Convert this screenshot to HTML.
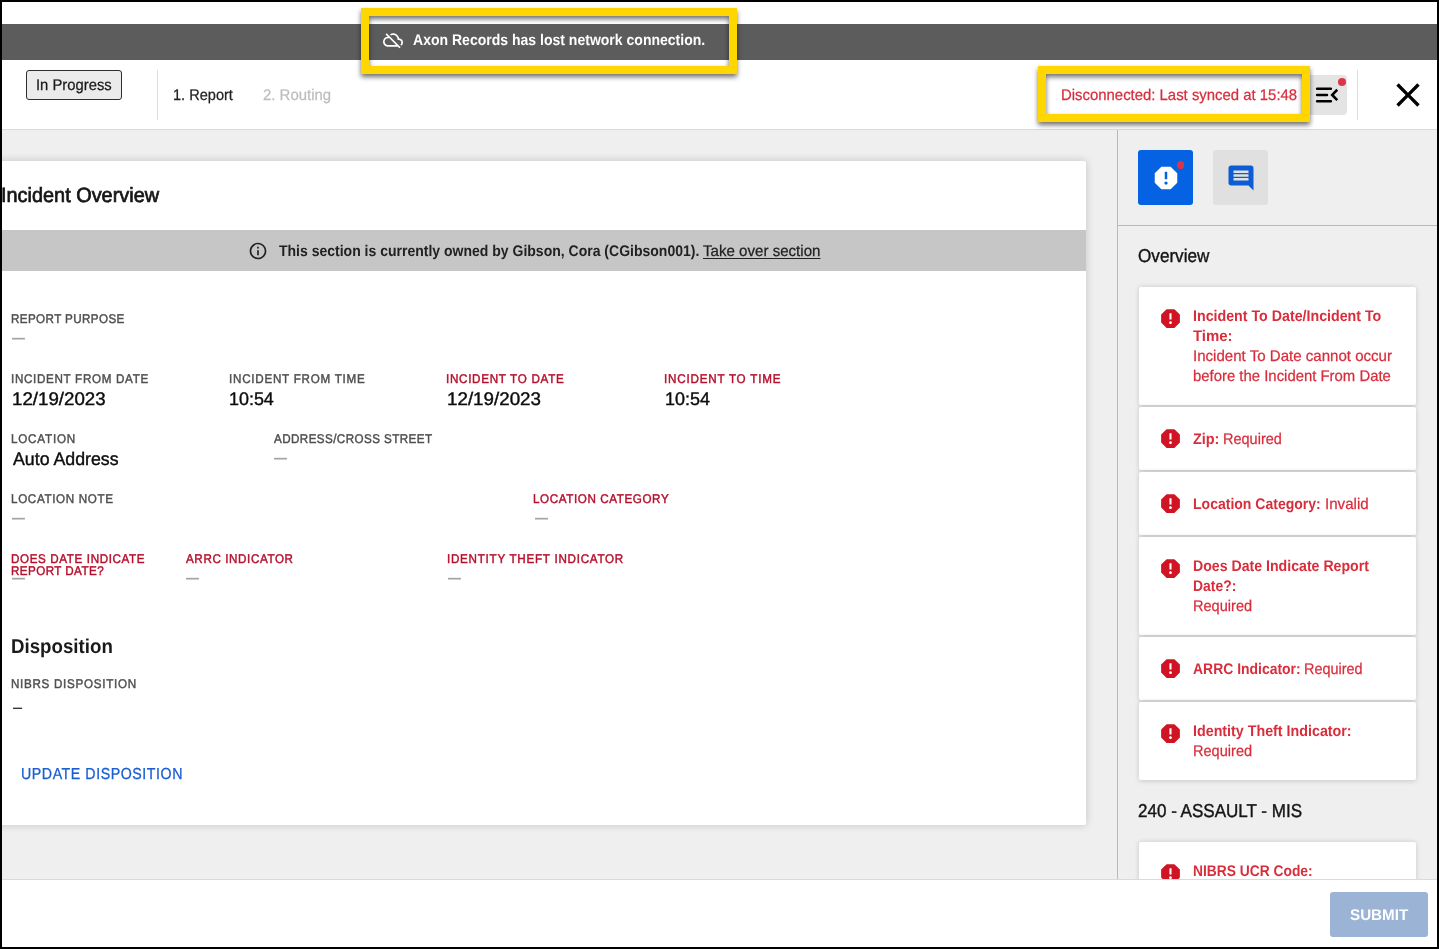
<!DOCTYPE html>
<html lang="en">
<head>
<meta charset="utf-8">
<title>Axon Records - Incident Report</title>
<style>
  html, body { margin: 0; padding: 0; }
  body { width: 1439px; height: 949px; position: relative; overflow: hidden; background: #fff;
         font-family: "Liberation Sans", sans-serif; text-rendering: geometricPrecision; }
  .abs, .t, svg.i { position: absolute; }
  .t { white-space: nowrap; display: block; transform-origin: 0 0; }
  #frame { left: 0; top: 0; width: 1439px; height: 949px; box-sizing: border-box; border: 2px solid #000; z-index: 50; pointer-events: none; }
  #banner { left: 2px; top: 24px; width: 1435px; height: 36px; background: #5c5c5c; }
  #header { left: 2px; top: 60px; width: 1435px; height: 69px; background: #fff; border-bottom: 1px solid #dadada; }
  #main { left: 2px; top: 130px; width: 1435px; height: 749px; background: #efefef; }
  #card { left: -16px; top: 161px; width: 1102px; height: 664px; background: #fff; border-radius: 2px;
          box-shadow: 0 0 8px rgba(0,0,0,.19); }
  #owned { left: 2px; top: 230px; width: 1084px; height: 41px; background: #c6c6c6; }
  #side-l { left: 1117px; top: 130px; width: 1px; height: 749px; background: #b9b9b9; }
  #side-h { left: 1118px; top: 225px; width: 1319px; height: 1px; background: #b9b9b9; }
  #tab1 { left: 1138px; top: 150px; width: 55px; height: 55px; border-radius: 3px; background: #0562e3; }
  #tab2 { left: 1213px; top: 150px; width: 55px; height: 55px; border-radius: 3px; background: #e0e0e0; }
  .dot { width: 8px; height: 8px; border-radius: 50%; background: #dc3545; }
  .ec { left: 1139px; width: 277px; background: #fff; border-radius: 2px;
        box-shadow: 0 0.5px 5px rgba(0,0,0,.17); }
  #footer { z-index: 30; left: 2px; top: 879px; width: 1435px; height: 68px; background: #fff; border-top: 1px solid #dadada; box-sizing: border-box; }
  #submit { z-index: 31; left: 1330px; top: 892px; width: 98px; height: 45px; border-radius: 3px; background: #9bb3d4; }
  #badge { left: 26px; top: 70px; width: 96px; height: 30px; box-sizing: border-box; border: 1px solid #2e2e2e; border-radius: 3px; background: #ebebeb; }
  .vdiv { top: 70px; width: 1px; height: 50px; background: #dddddd; }
  #menu { left: 1307px; top: 75px; width: 40px; height: 40px; border-radius: 4px; background: #e4e4e4; }
  .hl { box-sizing: border-box; border: 8px solid #ffd600; filter: drop-shadow(0.7px 3.7px 2.8px rgba(0,0,0,.56)); z-index: 20; }
  #hl1 { left: 361px; top: 8px; width: 376px; height: 66px; }
  #hl2 { left: 1038px; top: 66px; width: 272px; height: 56px; }
</style>
</head>
<body>
<div class="abs" id="banner"></div>
<div class="abs" id="header"></div>
<div class="abs" id="main"></div>
<div class="abs" id="card"></div>
<div class="abs" id="owned"></div>
<div class="abs" id="side-l"></div>
<div class="abs" id="side-h"></div>
<div class="abs" id="tab1"></div>
<div class="abs" id="tab2"></div>
<div class="abs ec" style="top:287px;height:118px"></div>
<div class="abs ec" style="top:407px;height:63px"></div>
<div class="abs ec" style="top:472px;height:63px"></div>
<div class="abs ec" style="top:537px;height:98px"></div>
<div class="abs ec" style="top:637px;height:63px"></div>
<div class="abs ec" style="top:702px;height:78px"></div>
<div class="abs ec" style="top:842px;height:63px"></div>
<div class="abs" id="footer"></div>
<div class="abs" id="submit"></div>
<div class="abs" id="badge"></div>
<div class="abs vdiv" style="left:157px"></div>
<div class="abs vdiv" style="left:1357px"></div>
<div class="abs" id="menu"></div>

<svg class="i" style="left:382.8px;top:29.8px" width="20" height="20" viewBox="0 0 24 24"><path fill="#fff" d="M24 15c0-2.64-2.05-4.78-4.65-4.96C18.67 6.59 15.64 4 12 4c-1.33 0-2.57.36-3.65.97l1.49 1.49C10.51 6.17 11.23 6 12 6c3.04 0 5.5 2.46 5.5 5.5v.5H19c1.66 0 3 1.34 3 3 0 .99-.48 1.85-1.21 2.4l1.41 1.41c1.09-.92 1.8-2.27 1.8-3.81zM4.41 3.86L3 5.27l2.77 2.77h-.42C2.34 8.36 0 10.91 0 14c0 3.31 2.69 6 6 6h11.73l2 2 1.41-1.41L4.41 3.86zM6 18c-2.21 0-4-1.79-4-4s1.79-4 4-4h1.73l8 8H6z"/></svg>
<svg class="i" style="left:248px;top:241px" width="20" height="20" viewBox="0 0 24 24"><path fill="#212121" d="M11 7h2v2h-2zm0 4h2v6h-2zm1-9C6.48 2 2 6.48 2 12s4.48 10 10 10 10-4.48 10-10S17.52 2 12 2zm0 18c-4.41 0-8-3.59-8-8s3.59-8 8-8 8 3.59 8 8-3.59 8-8 8z"/></svg>
<svg class="i" style="left:1307px;top:75px" width="40" height="40" viewBox="1307 75 40 40"><g fill="none" stroke="#000" stroke-width="2.5"><path stroke-linecap="round" d="M1317.1 88.7H1330.9M1317.1 94.9H1327M1317.1 101.3H1330.9"/><path stroke-width="2.6" d="M1337.25 89.75L1332.2 94.95L1337.25 100.15"/></g></svg>
<div class="abs dot" style="left:1338px;top:78px"></div>
<svg class="i" style="left:1388px;top:75px" width="40" height="40" viewBox="0 0 24 24"><path fill="#000" d="M19 6.41L17.59 5 12 10.59 6.41 5 5 6.41 10.59 12 5 17.59 6.41 19 12 13.41 17.59 19 19 17.59 13.41 12z"/></svg>
<svg class="i" style="left:1151px;top:163px" width="30" height="30" viewBox="0 0 24 24"><path fill="#fff" d="M15.73 3H8.27L3 8.27v7.46L8.27 21h7.46L21 15.73V8.27L15.73 3zM12 17.3c-.72 0-1.3-.58-1.3-1.3 0-.72.58-1.3 1.3-1.3.72 0 1.3.58 1.3 1.3 0 .72-.58 1.3-1.3 1.3zm1-4.3h-2V7h2v6z"/></svg>
<div class="abs dot" style="left:1176.8px;top:161.3px;width:7.4px;height:7.4px"></div>
<svg class="i" style="left:1225.7px;top:162.8px" width="30" height="30" viewBox="0 0 24 24"><path fill="#0b5cd5" d="M21.99 4c0-1.1-.89-2-1.99-2H4c-1.1 0-2 .9-2 2v12c0 1.1.9 2 2 2h14l4 4-.01-18zM18 14H6v-2h12v2zm0-3H6V9h12v2zm0-3H6V6h12v2z"/></svg>
<svg class="i" style="left:1158.1px;top:306.05px" width="25" height="25" viewBox="0 0 24 24"><path fill="#d01423" d="M15.73 3H8.27L3 8.27v7.46L8.27 21h7.46L21 15.73V8.27L15.73 3zM12 17.3c-.72 0-1.3-.58-1.3-1.3 0-.72.58-1.3 1.3-1.3.72 0 1.3.58 1.3 1.3 0 .72-.58 1.3-1.3 1.3zm1-4.3h-2V7h2v6z"/></svg>
<svg class="i" style="left:1158.1px;top:426.05px" width="25" height="25" viewBox="0 0 24 24"><path fill="#d01423" d="M15.73 3H8.27L3 8.27v7.46L8.27 21h7.46L21 15.73V8.27L15.73 3zM12 17.3c-.72 0-1.3-.58-1.3-1.3 0-.72.58-1.3 1.3-1.3.72 0 1.3.58 1.3 1.3 0 .72-.58 1.3-1.3 1.3zm1-4.3h-2V7h2v6z"/></svg>
<svg class="i" style="left:1158.1px;top:491.05px" width="25" height="25" viewBox="0 0 24 24"><path fill="#d01423" d="M15.73 3H8.27L3 8.27v7.46L8.27 21h7.46L21 15.73V8.27L15.73 3zM12 17.3c-.72 0-1.3-.58-1.3-1.3 0-.72.58-1.3 1.3-1.3.72 0 1.3.58 1.3 1.3 0 .72-.58 1.3-1.3 1.3zm1-4.3h-2V7h2v6z"/></svg>
<svg class="i" style="left:1158.1px;top:556.05px" width="25" height="25" viewBox="0 0 24 24"><path fill="#d01423" d="M15.73 3H8.27L3 8.27v7.46L8.27 21h7.46L21 15.73V8.27L15.73 3zM12 17.3c-.72 0-1.3-.58-1.3-1.3 0-.72.58-1.3 1.3-1.3.72 0 1.3.58 1.3 1.3 0 .72-.58 1.3-1.3 1.3zm1-4.3h-2V7h2v6z"/></svg>
<svg class="i" style="left:1158.1px;top:656.05px" width="25" height="25" viewBox="0 0 24 24"><path fill="#d01423" d="M15.73 3H8.27L3 8.27v7.46L8.27 21h7.46L21 15.73V8.27L15.73 3zM12 17.3c-.72 0-1.3-.58-1.3-1.3 0-.72.58-1.3 1.3-1.3.72 0 1.3.58 1.3 1.3 0 .72-.58 1.3-1.3 1.3zm1-4.3h-2V7h2v6z"/></svg>
<svg class="i" style="left:1158.1px;top:721.05px" width="25" height="25" viewBox="0 0 24 24"><path fill="#d01423" d="M15.73 3H8.27L3 8.27v7.46L8.27 21h7.46L21 15.73V8.27L15.73 3zM12 17.3c-.72 0-1.3-.58-1.3-1.3 0-.72.58-1.3 1.3-1.3.72 0 1.3.58 1.3 1.3 0 .72-.58 1.3-1.3 1.3zm1-4.3h-2V7h2v6z"/></svg>
<svg class="i" style="left:1158.1px;top:861.05px" width="25" height="25" viewBox="0 0 24 24"><path fill="#d01423" d="M15.73 3H8.27L3 8.27v7.46L8.27 21h7.46L21 15.73V8.27L15.73 3zM12 17.3c-.72 0-1.3-.58-1.3-1.3 0-.72.58-1.3 1.3-1.3.72 0 1.3.58 1.3 1.3 0 .72-.58 1.3-1.3 1.3zm1-4.3h-2V7h2v6z"/></svg>

<span class="t" style="left:413.05px;top:33.00px;font-size:15.45px;line-height:15.45px;transform:scaleX(0.9084);color:#ffffff;font-weight:700;">Axon Records has lost network connection.</span>
<span class="t" style="left:35.96px;top:78.00px;font-size:15.45px;line-height:15.45px;transform:scaleX(0.9597);color:#1a1a1a;-webkit-text-stroke:0.25px #1a1a1a;">In Progress</span>
<span class="t" style="left:172.92px;top:88.00px;font-size:15.45px;line-height:15.45px;transform:scaleX(0.9428);color:#212121;-webkit-text-stroke:0.25px #212121;">1. Report</span>
<span class="t" style="left:263.07px;top:88.00px;font-size:15.45px;line-height:15.45px;transform:scaleX(0.9672);color:#bdbdbd;-webkit-text-stroke:0.25px #bdbdbd;">2. Routing</span>
<span class="t" style="left:1060.60px;top:88.00px;font-size:15.45px;line-height:15.45px;transform:scaleX(0.9654);color:#d92d3c;-webkit-text-stroke:0.25px #d92d3c;">Disconnected: Last synced at 15:48</span>
<span class="t" style="left:1.11px;top:186.00px;font-size:20.6px;line-height:20.6px;transform:scaleX(0.9658);color:#151515;-webkit-text-stroke:0.7px #151515;">Incident Overview</span>
<span class="t" style="left:279.04px;top:244.00px;font-size:15.45px;line-height:15.45px;transform:scaleX(0.9074);color:#212121;font-weight:700;">This section is currently owned by Gibson, Cora (CGibson001).</span>
<span class="t" style="left:703.19px;top:244.00px;font-size:15.45px;line-height:15.45px;transform:scaleX(0.9778);color:#212121;-webkit-text-stroke:0.25px #212121;text-decoration:underline;text-underline-offset:2px;text-decoration-thickness:1px;">Take over section</span>
<span class="t" style="left:11.17px;top:313.00px;font-size:12.67px;line-height:12.67px;transform:scaleX(0.9200);color:#4f4f4f;letter-spacing:0.420px;-webkit-text-stroke:0.45px #4f4f4f;">REPORT PURPOSE</span>
<span class="t" style="left:11.05px;top:373.00px;font-size:12.67px;line-height:12.67px;transform:scaleX(0.9200);color:#4f4f4f;letter-spacing:0.736px;-webkit-text-stroke:0.45px #4f4f4f;">INCIDENT FROM DATE</span>
<span class="t" style="left:228.75px;top:373.00px;font-size:12.67px;line-height:12.67px;transform:scaleX(0.9200);color:#4f4f4f;letter-spacing:0.811px;-webkit-text-stroke:0.45px #4f4f4f;">INCIDENT FROM TIME</span>
<span class="t" style="left:446.35px;top:373.00px;font-size:12.67px;line-height:12.67px;transform:scaleX(0.9200);color:#b6102d;letter-spacing:0.763px;-webkit-text-stroke:0.45px #b6102d;">INCIDENT TO DATE</span>
<span class="t" style="left:664.45px;top:373.00px;font-size:12.67px;line-height:12.67px;transform:scaleX(0.9200);color:#b6102d;letter-spacing:0.856px;-webkit-text-stroke:0.45px #b6102d;">INCIDENT TO TIME</span>
<span class="t" style="left:11.17px;top:433.00px;font-size:12.67px;line-height:12.67px;transform:scaleX(0.9200);color:#4f4f4f;letter-spacing:0.853px;-webkit-text-stroke:0.45px #4f4f4f;">LOCATION</span>
<span class="t" style="left:273.60px;top:433.00px;font-size:12.67px;line-height:12.67px;transform:scaleX(0.9200);color:#4f4f4f;letter-spacing:0.454px;-webkit-text-stroke:0.45px #4f4f4f;">ADDRESS/CROSS STREET</span>
<span class="t" style="left:11.17px;top:493.00px;font-size:12.67px;line-height:12.67px;transform:scaleX(0.9200);color:#4f4f4f;letter-spacing:0.712px;-webkit-text-stroke:0.45px #4f4f4f;">LOCATION NOTE</span>
<span class="t" style="left:533.47px;top:493.00px;font-size:12.67px;line-height:12.67px;transform:scaleX(0.9200);color:#b6102d;letter-spacing:0.645px;-webkit-text-stroke:0.45px #b6102d;">LOCATION CATEGORY</span>
<span class="t" style="left:11.17px;top:553.00px;font-size:12.67px;line-height:12.67px;transform:scaleX(0.9200);color:#b6102d;letter-spacing:0.669px;-webkit-text-stroke:0.45px #b6102d;">DOES DATE INDICATE</span>
<span class="t" style="left:11.17px;top:565.00px;font-size:12.67px;line-height:12.67px;transform:scaleX(0.9200);color:#b6102d;letter-spacing:0.458px;-webkit-text-stroke:0.45px #b6102d;">REPORT DATE?</span>
<span class="t" style="left:186.20px;top:553.00px;font-size:12.67px;line-height:12.67px;transform:scaleX(0.9200);color:#b6102d;letter-spacing:0.653px;-webkit-text-stroke:0.45px #b6102d;">ARRC INDICATOR</span>
<span class="t" style="left:446.65px;top:553.00px;font-size:12.67px;line-height:12.67px;transform:scaleX(0.9200);color:#b6102d;letter-spacing:0.799px;-webkit-text-stroke:0.45px #b6102d;">IDENTITY THEFT INDICATOR</span>
<span class="t" style="left:11.17px;top:678.00px;font-size:12.67px;line-height:12.67px;transform:scaleX(0.9200);color:#4f4f4f;letter-spacing:0.759px;-webkit-text-stroke:0.45px #4f4f4f;">NIBRS DISPOSITION</span>
<span class="t" style="left:11.67px;top:390.00px;font-size:18.2px;line-height:18.2px;transform:scaleX(1.0288);color:#0c0c0c;-webkit-text-stroke:0.4px #0c0c0c;">12/19/2023</span>
<span class="t" style="left:229.44px;top:390.00px;font-size:18.2px;line-height:18.2px;transform:scaleX(0.9840);color:#0c0c0c;-webkit-text-stroke:0.4px #0c0c0c;">10:54</span>
<span class="t" style="left:447.37px;top:390.00px;font-size:18.2px;line-height:18.2px;transform:scaleX(1.0321);color:#0c0c0c;-webkit-text-stroke:0.4px #0c0c0c;">12/19/2023</span>
<span class="t" style="left:665.13px;top:390.00px;font-size:18.2px;line-height:18.2px;transform:scaleX(0.9863);color:#0c0c0c;-webkit-text-stroke:0.4px #0c0c0c;">10:54</span>
<span class="t" style="left:12.57px;top:450.00px;font-size:18.2px;line-height:18.2px;transform:scaleX(0.9759);color:#0c0c0c;-webkit-text-stroke:0.4px #0c0c0c;">Auto Address</span>
<span class="t" style="left:11.35px;top:637.00px;font-size:19.98px;line-height:19.98px;transform:scaleX(0.9365);color:#1a1a1a;font-weight:700;">Disposition</span>
<span class="t" style="left:20.95px;top:767.00px;font-size:15.96px;line-height:15.96px;transform:scaleX(0.8900);color:#1b5fd2;letter-spacing:0.625px;-webkit-text-stroke:0.3px #1b5fd2;">UPDATE DISPOSITION</span>
<span class="t" style="left:1138.09px;top:247.00px;font-size:18.54px;line-height:18.54px;transform:scaleX(0.9241);color:#151515;-webkit-text-stroke:0.4px #151515;">Overview</span>
<span class="t" style="left:1137.74px;top:802.00px;font-size:18.54px;line-height:18.54px;transform:scaleX(0.9188);color:#151515;-webkit-text-stroke:0.4px #151515;">240 - ASSAULT - MIS</span>
<span class="t" style="left:1349.76px;top:908.00px;font-size:15.45px;line-height:15.45px;transform:scaleX(0.9850);color:#ffffff;font-weight:700;z-index:32;">SUBMIT</span>
<span class="t" style="left:1193.35px;top:309.00px;font-size:15.45px;line-height:15.45px;transform:scaleX(0.9212);color:#d92d3c;font-weight:700;">Incident To Date/Incident To</span>
<span class="t" style="left:1193.23px;top:329.00px;font-size:15.45px;line-height:15.45px;transform:scaleX(0.9682);color:#d92d3c;font-weight:700;">Time:</span>
<span class="t" style="left:1193.03px;top:349.00px;font-size:15.45px;line-height:15.45px;transform:scaleX(0.9756);color:#d92d3c;-webkit-text-stroke:0.25px #d92d3c;">Incident To Date cannot occur</span>
<span class="t" style="left:1193.46px;top:369.00px;font-size:15.45px;line-height:15.45px;transform:scaleX(0.9648);color:#d92d3c;-webkit-text-stroke:0.25px #d92d3c;">before the Incident From Date</span>
<span class="t" style="left:1193.17px;top:432.00px;font-size:15.45px;line-height:15.45px;transform:scaleX(0.9336);color:#d92d3c;font-weight:700;">Zip:</span>
<span class="t" style="left:1222.93px;top:432.00px;font-size:15.45px;line-height:15.45px;transform:scaleX(0.9397);color:#d92d3c;-webkit-text-stroke:0.25px #d92d3c;">Required</span>
<span class="t" style="left:1193.36px;top:497.00px;font-size:15.45px;line-height:15.45px;transform:scaleX(0.9084);color:#d92d3c;font-weight:700;">Location Category:</span>
<span class="t" style="left:1324.53px;top:497.00px;font-size:15.45px;line-height:15.45px;transform:scaleX(0.9798);color:#d92d3c;-webkit-text-stroke:0.25px #d92d3c;">Invalid</span>
<span class="t" style="left:1193.35px;top:559.00px;font-size:15.45px;line-height:15.45px;transform:scaleX(0.9155);color:#d92d3c;font-weight:700;">Does Date Indicate Report</span>
<span class="t" style="left:1193.37px;top:579.00px;font-size:15.45px;line-height:15.45px;transform:scaleX(0.9009);color:#d92d3c;font-weight:700;">Date?:</span>
<span class="t" style="left:1193.23px;top:599.00px;font-size:15.45px;line-height:15.45px;transform:scaleX(0.9430);color:#d92d3c;-webkit-text-stroke:0.25px #d92d3c;">Required</span>
<span class="t" style="left:1192.85px;top:662.00px;font-size:15.45px;line-height:15.45px;transform:scaleX(0.9033);color:#d92d3c;font-weight:700;">ARRC Indicator:</span>
<span class="t" style="left:1304.34px;top:662.00px;font-size:15.45px;line-height:15.45px;transform:scaleX(0.9347);color:#d92d3c;-webkit-text-stroke:0.25px #d92d3c;">Required</span>
<span class="t" style="left:1193.34px;top:724.00px;font-size:15.45px;line-height:15.45px;transform:scaleX(0.9248);color:#d92d3c;font-weight:700;">Identity Theft Indicator:</span>
<span class="t" style="left:1193.23px;top:744.00px;font-size:15.45px;line-height:15.45px;transform:scaleX(0.9430);color:#d92d3c;-webkit-text-stroke:0.25px #d92d3c;">Required</span>
<span class="t" style="left:1193.38px;top:864.00px;font-size:15.45px;line-height:15.45px;transform:scaleX(0.8943);color:#d92d3c;font-weight:700;">NIBRS UCR Code:</span>
<span class="t" style="left:12.00px;top:324.93px;font-size:25.00px;line-height:25.00px;transform:scaleX(0.5180);color:#a4a4a4;">—</span>
<span class="t" style="left:273.50px;top:444.93px;font-size:25.00px;line-height:25.00px;transform:scaleX(0.5180);color:#a4a4a4;">—</span>
<span class="t" style="left:12.00px;top:504.92px;font-size:25.00px;line-height:25.00px;transform:scaleX(0.5180);color:#a4a4a4;">—</span>
<span class="t" style="left:534.50px;top:504.92px;font-size:25.00px;line-height:25.00px;transform:scaleX(0.5180);color:#a4a4a4;">—</span>
<span class="t" style="left:12.00px;top:564.92px;font-size:25.00px;line-height:25.00px;transform:scaleX(0.5180);color:#a4a4a4;">—</span>
<span class="t" style="left:186.30px;top:564.92px;font-size:25.00px;line-height:25.00px;transform:scaleX(0.5180);color:#a4a4a4;">—</span>
<span class="t" style="left:447.70px;top:564.92px;font-size:25.00px;line-height:25.00px;transform:scaleX(0.5180);color:#a4a4a4;">—</span>
<span class="t" style="left:12.70px;top:697.55px;font-size:18.57px;line-height:18.57px;transform:scaleX(0.8846);color:#222222;">–</span>
<div class="abs hl" id="hl1"></div>
<div class="abs hl" id="hl2"></div>
<div class="abs" id="frame"></div>
</body>
</html>
